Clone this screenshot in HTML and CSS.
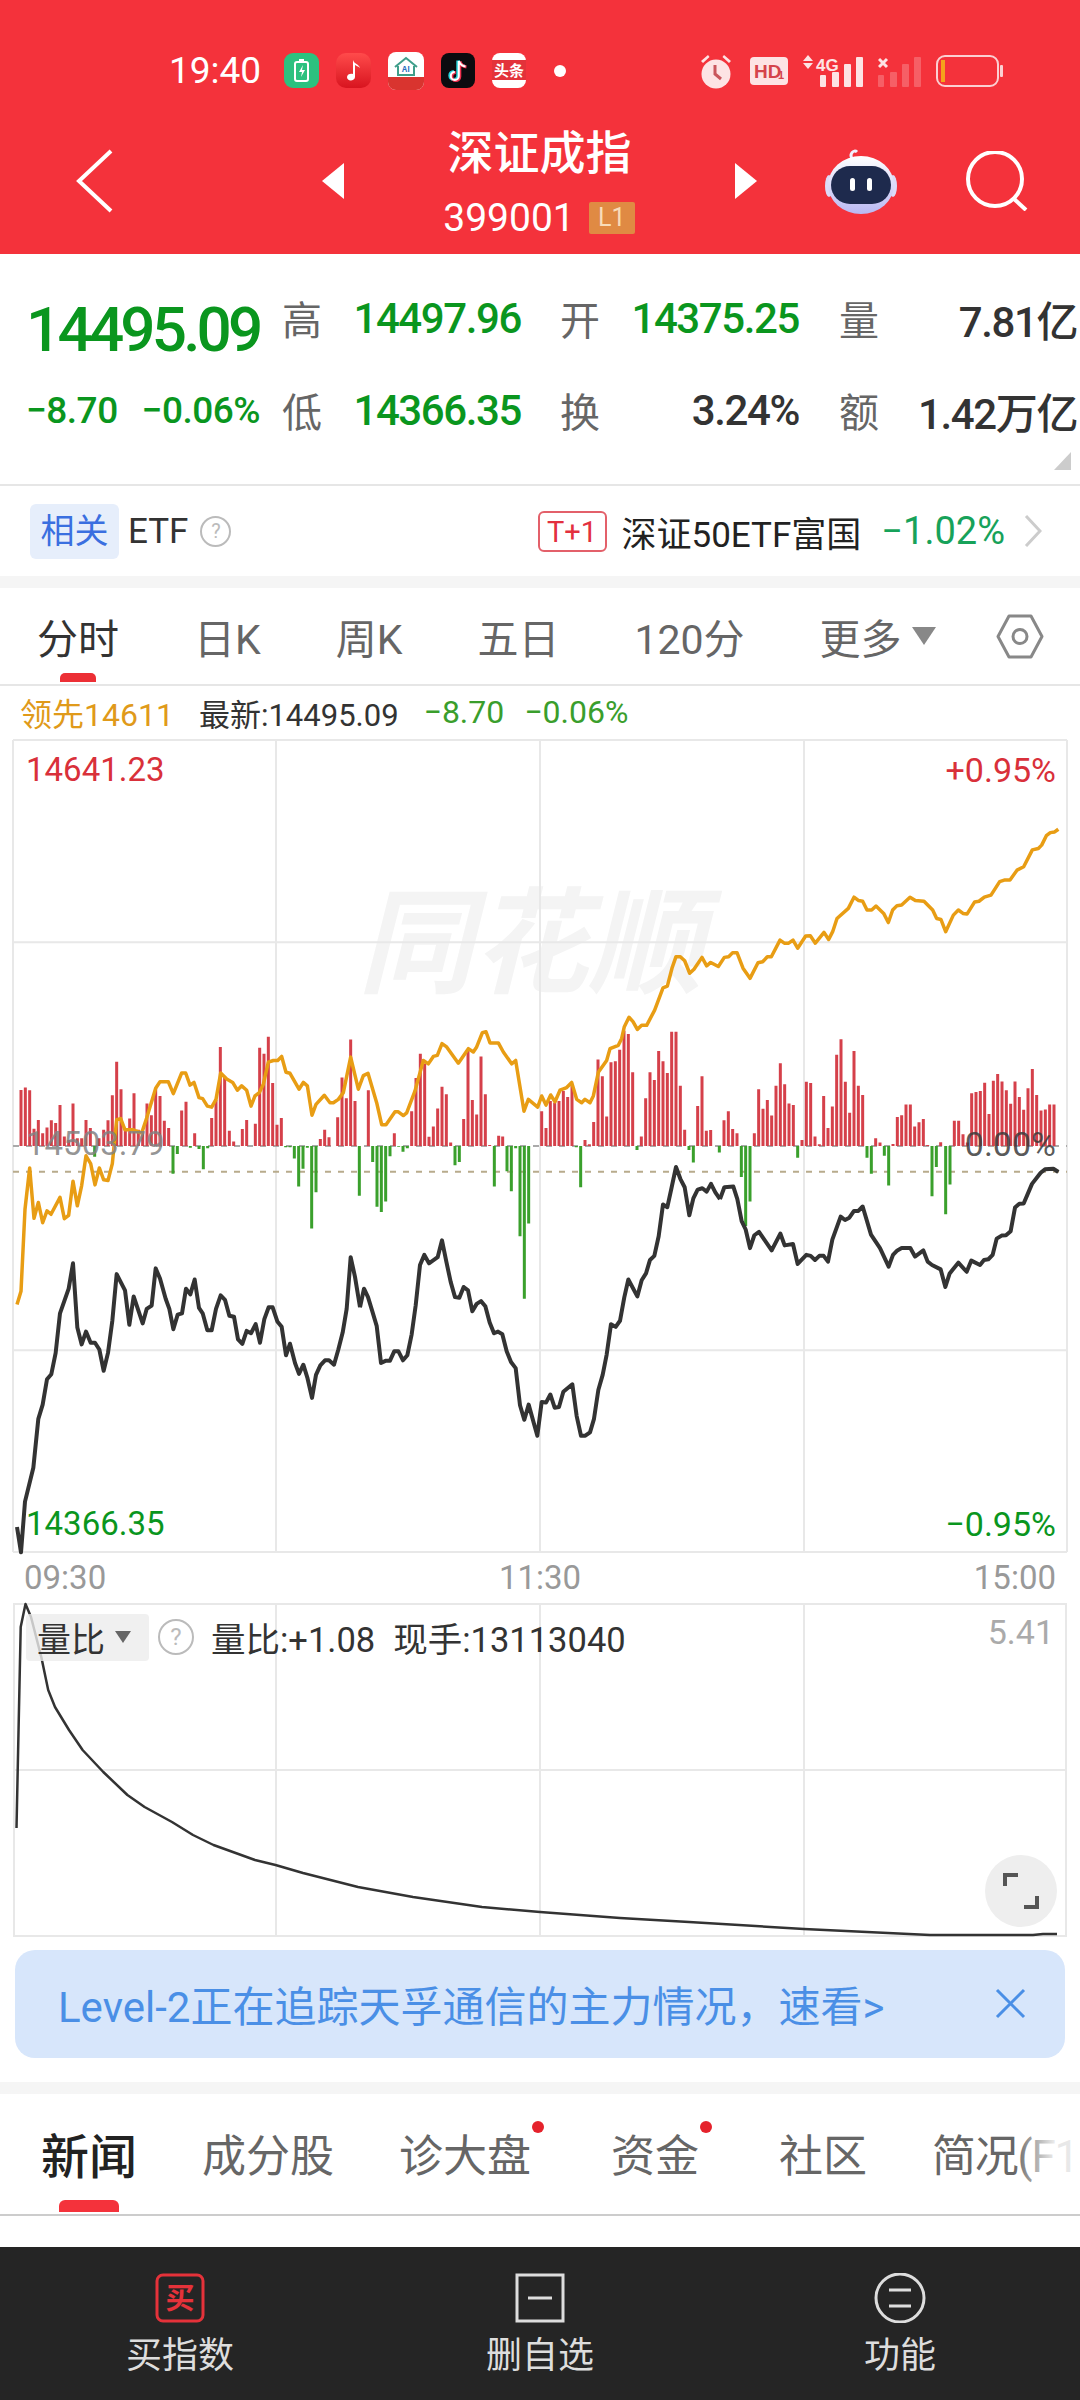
FILE: index.html
```html
<!DOCTYPE html>
<html lang="zh-CN">

<head>
  <meta charset="UTF-8">
  <meta name="viewport" content="width=device-width, initial-scale=1.0">
  <title>深证成指</title>
  <link rel="stylesheet" href="styles.css">
</head>

<body>
  <div class="main">
    <!-- 顶部红色区域 -->
    <div class="header">
      <div class="status">
        <span class="clock">19:40</span>
        <div class="apps">
          <svg width="35" height="35" viewBox="0 0 35 35"><rect width="35" height="35" rx="9" fill="#2cc17f"/><rect x="11" y="9" width="13" height="19" rx="2" fill="none" stroke="#fff" stroke-width="2"/><rect x="15" y="6" width="5" height="3" fill="#fff"/><path d="M19 12l-4 7h3l-1 5 4-7h-3z" fill="#fff"/></svg>
          <svg width="35" height="35" viewBox="0 0 35 35"><defs><linearGradient id="musicbg" x1="0" y1="0" x2="0" y2="1"><stop offset="0" stop-color="#ff4b4b"/><stop offset="1" stop-color="#d8141f"/></linearGradient></defs><rect width="35" height="35" rx="10" fill="url(#musicbg)"/><path d="M17 7c1 4 6 4 7 8-2-2-4-2-5-3v12c0 4-8 5-8 0 0-3 4-4 6-3z" fill="#fff"/></svg>
          <svg width="36" height="38" viewBox="0 0 36 38"><rect width="36" height="38" rx="8" fill="#fff"/><path d="M0 25h36v5a8 8 0 0 1-8 8H8a8 8 0 0 1-8-8z" fill="#d9342f"/><path d="M7 15L18 6l11 9M10 14v9h16v-9" fill="none" stroke="#3f9e8a" stroke-width="2"/><text class="app-text" x="18" y="20" font-size="8" fill="#2b6fc0" text-anchor="middle">AI</text></svg>
          <svg width="34" height="35" viewBox="0 0 34 35"><rect width="34" height="35" rx="8" fill="#0b0b0f"/><path d="M17.800 8v15a4 4 0 1 1-4-4M18 8c1 3.500 3.500 5 6.500 5.500" fill="none" stroke="#25d6de" stroke-width="3" transform="translate(-1 -.5)"/><path d="M17.800 8v15a4 4 0 1 1-4-4M18 8c1 3.500 3.500 5 6.500 5.500" fill="none" stroke="#f0304f" stroke-width="3" transform="translate(1 .5)"/><path d="M17.800 8v15a4 4 0 1 1-4-4M18 8c1 3.500 3.500 5 6.500 5.500" fill="none" stroke="#fff" stroke-width="2"/></svg>
          <svg width="34" height="35" viewBox="0 0 34 35"><rect width="34" height="35" rx="8" fill="#fff"/><rect y="7" width="34" height="20" fill="#e3323a"/><text class="app-text" x="17" y="23" font-size="15" fill="#fff" text-anchor="middle">头条</text></svg>
          <span class="dot"></span>
        </div>
        <div class="sys">
          <svg class="alarm" width="32" height="36" viewBox="0 0 32 36"><g fill="#fde3e4"><circle cx="16" cy="21" r="14.500"/><path d="M1 8l7-6 1.500 2-6.500 6zM31 8l-7-6-1.500 2 6.500 6z"/></g><path d="M15 12v9l6 5" fill="none" stroke="#c9565c" stroke-width="3"/></svg>
          <svg width="38" height="28" viewBox="0 0 38 28"><rect width="38" height="28" rx="4" fill="#fde3e4"/><text class="hd-text" x="4" y="21" font-size="19" fill="#d5444b">HD</text><text class="hd-text" x="28" y="22" font-size="11" fill="#d5444b">1</text></svg>
          <svg width="60" height="32" viewBox="0 0 60 32"><g fill="#fde3e4"><path d="M0 6l5-6 5 6zM0 8h10l-5 6z"/><rect x="17" y="20" width="6" height="12" rx="1"/><rect x="29" y="17" width="7" height="15" rx="1"/><rect x="41" y="9" width="7" height="23" rx="1"/><rect x="53" y="2" width="7" height="30" rx="1"/></g><text class="hd-text" x="13" y="16" font-size="17" fill="#fde3e4">4G</text></svg>
          <svg width="43" height="32" viewBox="0 0 43 32"><g fill="#fff" opacity=".22"><rect y="20" width="6" height="12" rx="1"/><rect x="12" y="17" width="7" height="15" rx="1"/><rect x="24" y="9" width="7" height="23" rx="1"/><rect x="36" y="2" width="7" height="30" rx="1"/></g><path d="M1 4l8 8M9 4l-8 8" stroke="#fde3e4" stroke-width="3"/></svg>
          <svg width="68" height="32" viewBox="0 0 68 32"><rect x="1" y="1" width="61" height="30" rx="8" fill="none" stroke="#fbd0d2" stroke-width="2"/><rect x="5" y="5" width="4" height="22" fill="#f5a31c"/><rect x="64" y="10" width="3" height="12" rx="1" fill="#fbd0d2"/></svg>
        </div>
      </div>
      <div class="nav">
        <svg class="back" width="37" height="64" viewBox="0 0 37 64"><path d="M35 2L3 32l32 30" fill="none" stroke="#fff" stroke-width="4"/></svg>
        <span class="tri tri-left"></span>
        <div class="title">
          <h1>深证成指</h1>
          <div class="code"><span>399001</span><em>L1</em></div>
        </div>
        <span class="tri tri-right"></span>
        <svg class="robot" width="72" height="66" viewBox="0 0 72 66">
          <defs><linearGradient id="shell" x1="0" y1="0" x2="0" y2="1"><stop offset="0" stop-color="#fff"/><stop offset="1" stop-color="#b9b8f2"/></linearGradient></defs>
          <path d="M28 12c-5-6 1-11 4-8" fill="none" stroke="#f1f0fd" stroke-width="3"/>
          <ellipse cx="4" cy="38" rx="4" ry="11" fill="#dcdbf8"/>
          <ellipse cx="68" cy="38" rx="4" ry="11" fill="#dcdbf8"/>
          <ellipse cx="36" cy="37" rx="33" ry="29" fill="url(#shell)"/>
          <rect x="6" y="18" width="60" height="38" rx="19" fill="#1e2a4d"/>
          <rect x="25" y="30" width="5" height="13" rx="2.500" fill="#fff"/>
          <rect x="42" y="30" width="5" height="13" rx="2.500" fill="#fff"/>
        </svg>
        <svg class="search" width="62" height="60" viewBox="0 0 62 60"><circle cx="29" cy="28" r="27" fill="none" stroke="#fff" stroke-width="4"/><path d="M47 47l13 12" stroke="#fff" stroke-width="4"/></svg>
      </div>
    </div>

    <!-- 行情数据 -->
    <div class="quote">
      <div class="big-price">14495.09</div>
      <span class="lab">高</span><span class="val up">14497.96</span>
      <span class="lab">开</span><span class="val up">14375.25</span>
      <span class="lab">量</span><span class="val">7.81亿</span>
      <div class="change"><span>−8.70</span><span>−0.06%</span></div>
      <span class="lab">低</span><span class="val up">14366.35</span>
      <span class="lab">换</span><span class="val">3.24%</span>
      <span class="lab">额</span><span class="val">1.42万亿</span>
      <span class="corner"></span>
    </div>

    <!-- 相关ETF -->
    <div class="etf">
      <span class="chip">相关</span>
      <span class="etf-label">ETF</span>
      <span class="help">?</span>
      <span class="t1">T+1</span>
      <span class="etf-name">深证50ETF富国</span>
      <span class="etf-rate">−1.02%</span>
      <svg class="more" width="18" height="32" viewBox="0 0 18 32"><path d="M2 1l14 15L2 31" fill="none" stroke="#ccc" stroke-width="3"/></svg>
    </div>
    <div class="band"></div>

    <div class="period">
      <span class="active">分时</span>
      <span>日K</span>
      <span>周K</span>
      <span>五日</span>
      <span>120分</span>
      <span class="period-more">更多<i></i></span>
      <svg class="gear" width="48" height="45" viewBox="0 0 48 45"><path d="M13 2h22l11 20.500L35 43H13L2 22.500z" fill="none" stroke="#888" stroke-width="3" stroke-linejoin="round"/><circle cx="24" cy="22.500" r="7" fill="none" stroke="#888" stroke-width="3"/></svg>
    </div>

    <div class="legend">
      <span class="lead">领先14611</span>
      <span class="latest">最新:14495.09</span>
      <span class="down">−8.70</span>
      <span class="down">−0.06%</span>
    </div>

    <!-- 分时图 单位：横向1/3像素 -->
    <div class="chart">
      <span class="mark">同花顺</span>
      <svg class="plot" viewBox="39 -858 3162 2402" preserveAspectRatio="none">
        <path class="grid" d="M39 -858V1544M828 -858V1544M1620 -858V1544M2412 -858V1544M3201 -858V1544M39 -858H3201M39 -260H3201M39 947H3201M39 1544H3201"/>
        <path class="base" d="M39 343H3201"/>
        <path class="zero" d="M39 419H3201"/>
        <path class="bar-up" d="M63 343V177M76 343V170M89 343V178M102 343V292M115 343V266M128 343V305M141 343V288M154 343V267M167 343V275M180 343V222M193 343V315M206 343V325M219 343V217M232 343V320M245 343V320M258 343V266M271 343V290M297 343V320M311 343V295M324 343V267M337 343V193M350 343V94M363 343V175M376 343V290M389 343V262M402 343V187M415 343V295M428 343V300M441 343V217M454 343V252M467 343V172M480 343V195M493 343V268M506 343V290M545 343V238M558 343V212M584 343V305M635 343V260M648 343V207M661 343V50M674 343V140M688 343V298M701 343V330M727 343V293M740 343V266M766 343V277M779 343V52M792 343V70M805 343V20M818 343V157M831 343V280M844 343V260M961 343V322M974 343V295M987 343V317M1013 343V258M1026 343V140M1039 343V202M1052 343V28M1065 343V210"/>
        <path class="bar-down" d="M284 343V375M519 343V425M532 343V367M571 343V348M597 343V352M610 343V412M623 343V350M857 343V347M870 343V347M883 343V380M896 343V463M909 343V410M922 343V348M935 343V587M948 343V480M1078 343V490"/>
        <g transform="translate(1080 0)">
          <path class="bar-up" d="M25 343V178M103 343V305M155 343V240M168 343V142M181 343V70M194 343V100M207 343V316M220 343V285M233 343V232M246 343V168M259 343V190M272 343V333M311 343V263M324 343V60M337 343V207M350 343V250M363 343V78M376 343V190M389 343V340M416 343V313M428 343V315M545 343V240M558 343V290M571 343V210M584 343V215M597 343V210M610 343V180M623 343V198M636 343V165M675 343V325M688 343V338M701 343V272M714 343V87M727 343V137M740 343V256M753 343V95M766 343V92M779 343V58M792 343V2M805 343V12M818 343V125M844 343V315M857 343V202M870 343V125M883 343V148M896 343V62M909 343V92M922 343V127M935 343V5M948 343V5M961 343V165M974 343V295M1013 343V225M1026 343V137M1039 343V298M1052 343V296"/>
          <path class="bar-down" d="M38 343V390M51 343V523M64 343V538M77 343V507M90 343V373M116 343V345M129 343V360M142 343V350M285 343V400M298 343V390M403 343V463M441 343V418M454 343V477M467 343V350M480 343V610M493 343V795M506 343V572M649 343V347M662 343V465M831 343V355M987 343V355M1000 343V392M1078 343V362"/>
        </g>
        <g transform="translate(2160 0)">
          <path class="bar-up" d="M12 343V267M25 343V240M38 343V293M51 343V305M103 343V305M116 343V175M129 343V233M142 343V207M155 343V253M168 343V165M181 343V98M194 343V160M207 343V217M220 343V222M246 343V325M259 343V153M272 343V157M285 343V315M298 343V338M311 343V195M324 343V290M337 343V226M350 343V73M363 343V27M376 343V153M389 343V245M402 343V62M415 343V165M428 343V192M467 343V320M480 343V333M519 343V337M532 343V257M545 343V252M558 343V220M571 343V220M584 343V285M597 343V273M610 343V263M623 343V340M662 343V332M703 343V268M716 343V268M729 343V308M742 343V333M755 343V187M768 343V183M781 343V180M794 343V156M807 343V248M820 343V150M833 343V130M846 343V152M859 343V178M872 343V218M885 343V152M898 343V198M911 343V236M924 343V172M937 343V115M950 343V192M963 343V238M976 343V235M989 343V220M1002 343V220"/>
          <path class="bar-down" d="M64 343V435M77 343V580M90 343V507M233 343V378M441 343V378M454 343V425M493 343V372M506 343V460M636 343V492M649 343V405M677 343V545M690 343V457"/>
        </g>
        <!-- 领先指标 -->
        <polyline class="line-lead" points="51,812 63,773 75,530 89,408 102,557 115,510 128,570 141,535 153,545 180,495 193,558 206,548 219,447 232,520 245,460 258,372 272,395 285,458 298,408 311,443 324,445 337,395 350,265 362,262 375,295 400,295 425,305 440,260 467,172 480,153 505,153 520,188 545,127 557,127 570,163 582,155 597,200 608,203 622,225 635,228 648,205 662,127 680,145 698,155 712,178 725,165 740,178 753,225 765,195 778,185 790,160 805,95 820,90 833,90 845,78 858,125 870,128 897,175 910,155 922,165 936,252 948,220 973,193 990,215 1000,215 1015,205 1030,185 1052,80 1075,175 1090,135 1104,128 1130,215 1145,280 1158,280 1185,242 1195,242 1210,253 1220,245 1245,180 1270,90 1285,100 1300,78 1312,75 1326,40 1340,50 1375,98 1405,55 1420,65 1430,50 1447,8 1458,5 1470,38 1495,38 1510,65 1535,100 1547,90 1572,240 1585,205 1613,228 1625,195 1638,222 1652,192 1665,212 1680,178 1700,170 1715,155 1730,205 1745,215 1755,205 1770,215 1780,195 1795,125 1820,90 1830,55 1855,45 1865,25 1873,-10 1887,-38 1899,-25 1912,-2 1925,-14 1940,-14 1964,-59 1989,-125 2002,-130 2016,-183 2028,-217 2041,-217 2054,-205 2069,-168 2082,-180 2106,-215 2120,-190 2132,-200 2155,-188 2173,-215 2186,-217 2198,-229 2211,-229 2229,-183 2250,-153 2274,-199 2288,-202 2302,-217 2314,-217 2340,-266 2353,-257 2366,-257 2379,-266 2393,-242 2417,-278 2431,-279 2446,-257 2472,-289 2486,-268 2498,-291 2511,-330 2545,-360 2562,-393 2576,-383 2588,-381 2601,-355 2615,-355 2628,-367 2651,-345 2665,-318 2678,-355 2691,-368 2705,-370 2730,-393 2746,-383 2772,-381 2798,-355 2810,-330 2823,-327 2837,-291 2860,-340 2875,-355 2889,-345 2901,-343 2924,-379 2937,-381 2953,-393 2973,-399 2999,-439 3015,-444 3030,-444 3051,-473 3071,-483 3097,-533 3115,-537 3125,-547 3139,-575 3151,-584 3164,-586 3175,-594"/>
        <!-- 价格线 -->
        <polyline class="line-price" points="51,1470 63,1545 75,1395 100,1295 115,1150 128,1108 141,1033 154,1018 167,955 180,838 206,765 219,690 232,880 245,930 258,892 272,925 285,925 298,945 311,1008 324,955 337,860 350,722 375,770 388,872 401,788 428,868 440,825 455,815 467,705 480,735 497,795 508,825 520,885 533,842 546,838 558,765 571,782 584,738 597,822 608,838 622,888 635,888 648,825 662,785 675,798 688,845 702,848 714,915 727,928 740,890 753,897 767,870 780,925 793,855 806,820 818,820 832,862 845,878 858,962 870,928 885,985 897,1017 910,990 922,1028 936,1088 948,1020 961,992 975,977 987,977 1002,990 1015,945 1028,895 1040,825 1052,672 1065,730 1080,820"/>
        <polyline class="line-price" transform="translate(1080 0)" points="0,820 12,765 24,790 37,832 50,875 63,985 78,978 90,978 103,950 115,950 129,977 142,962 155,900 167,815 180,695 193,665 207,690 233,672 246,622 259,685 272,745 285,790 298,792 311,760 324,770 337,832 350,810 363,802 376,817 389,865 402,897 414,892 427,900 440,950 453,982 467,1000 480,1110 493,1153 506,1108 532,1200 545,1100 558,1102 571,1078 584,1117 597,1115 610,1070 637,1048 650,1142 663,1200 676,1200 690,1190 702,1150 715,1065 728,1020 740,960 753,870 767,878 780,860 793,790 805,738 832,788 845,740 858,720 870,680 883,668 896,610 909,516 922,524 935,465 948,405 961,440 974,465 988,548 1000,498 1013,472 1027,468 1040,478 1053,455 1066,480 1080,500"/>
        <polyline class="line-price" transform="translate(2160 0)" points="0,500 13,465 40,463 52,500 65,565 77,590 90,645 103,607 117,597 155,652 181,602 194,637 219,633 233,692 259,665 272,668 285,680 298,668 311,668 324,685 337,620 362,552 375,562 388,555 402,535 415,535 428,522 453,605 480,645 506,700 519,665 532,652 545,645 571,645 585,670 610,652 623,685 636,695 662,708 676,760 689,720 715,688 740,715 754,682 780,695 792,680 805,678 818,665 830,617 845,608 858,607 872,595 885,525 898,514 911,513 936,455 962,422 975,412 1000,410 1015,420"/>
      </svg>
      <span class="tag tag-high">14641.23</span>
      <span class="tag tag-high-rate">+0.95%</span>
      <span class="tag tag-pre">14503.79</span>
      <span class="tag tag-zero">0.00%</span>
      <span class="tag tag-low">14366.35</span>
      <span class="tag tag-low-rate">−0.95%</span>
    </div>

    <div class="times">
      <span>09:30</span>
      <span>11:30</span>
      <span>15:00</span>
    </div>

    <!-- 量比副图 -->
    <div class="sub-chart">
      <svg class="plot" viewBox="0 0 1054 334" preserveAspectRatio="none">
        <path class="grid" d="M1 0V334M263 0V334M527 0V334M791 0V334M1053 0V334M0 1H1054M0 167H1054M0 333H1054"/>
        <polyline class="line-ratio" points="3.500,225 7.700,24 12.500,1 18,14 28.300,54 35.200,87 42,104 56,127 69.600,147 90.300,169 114.400,192 131.600,204 159,219 180,232 200.500,242 242,257 262.500,262 290,270 345,284 400,294 469,304 527,309 607,315 676,319 791,326 917,332 1020,332 1030,331 1044,331"/>
      </svg>
      <div class="sub-legend">
        <span class="sub-chip">量比<i></i></span>
        <span class="help help-big">?</span>
        <span class="sub-text">量比:+1.08</span>
        <span class="sub-text">现手:13113040</span>
      </div>
      <span class="sub-max">5.41</span>
      <span class="full">
        <svg width="36" height="36" viewBox="0 0 36 36"><path d="M2 13V2h13M34 23v11H21" fill="none" stroke="#555" stroke-width="4"/></svg>
      </span>
    </div>

    <div class="notice">
      <span>Level-2正在追踪天孚通信的主力情况，速看&gt;</span>
      <svg width="31" height="31" viewBox="0 0 31 31"><path d="M2 2l27 27M29 2L2 29" stroke="#4a8fe6" stroke-width="3"/></svg>
    </div>
    <div class="band band-low"></div>

    <div class="tabs">
      <span class="active">新闻</span>
      <span>成分股</span>
      <span class="dotted">诊大盘</span>
      <span class="dotted">资金</span>
      <span>社区</span>
      <span class="tab-last">简况(F1</span>
    </div>

    <div class="spacer"></div>

    <!-- 底部操作栏 -->
    <div class="footer">
      <div class="action">
        <svg width="50" height="50" viewBox="0 0 50 50"><rect x="2" y="2" width="46" height="46" rx="6" fill="none" stroke="#e5323a" stroke-width="3"/><text class="buy-text" x="25" y="36" font-size="29" text-anchor="middle">买</text></svg>
        <span>买指数</span>
      </div>
      <div class="action">
        <svg width="50" height="50" viewBox="0 0 50 50"><rect x="2" y="2" width="46" height="46" fill="none" stroke="#ddd" stroke-width="3"/><path d="M13 25h24" stroke="#ddd" stroke-width="3"/></svg>
        <span>删自选</span>
      </div>
      <div class="action">
        <svg width="52" height="50" viewBox="0 0 52 50"><circle cx="26" cy="25" r="24" fill="none" stroke="#ddd" stroke-width="3"/><path d="M15 17h22M15 33h22" stroke="#ddd" stroke-width="3"/></svg>
        <span>功能</span>
      </div>
    </div>
  </div>
</body>

</html>
```
FILE: styles.css
```css
* {
  margin: 0;
  padding: 0;
  box-sizing: border-box;
}

body {
  font-family: Roboto, "Noto Sans CJK SC", sans-serif;
  background-color: #fff;
}

.main {
  width: 1080px;
  height: 2400px;
  overflow: hidden;
  display: flex;
  flex-direction: column;
}

/* 顶部 */
.header {
  height: 254px;
  flex: none;
  background-color: #f4323b;
  color: #fff;
}

.status {
  height: 88px;
  padding: 53px 76px 0 169px;
  display: flex;
  align-items: center;

  & .clock {
    width: 91px;
    font-size: 37px;
    line-height: 36px;
    white-space: nowrap;
  }

  & .apps {
    margin-left: 24px;
    display: flex;
    align-items: center;
    gap: 17px;
  }

  & .dot {
    width: 12px;
    height: 12px;
    margin-left: 11px;
    border-radius: 50%;
    background-color: #fff;
  }

  & .sys {
    margin-left: auto;
    display: flex;
    align-items: center;
    gap: 15px;
  }

  & .alarm {
    margin-right: 3px;
  }
}

.app-text {
  font-family: "Noto Sans CJK SC", sans-serif;
  font-weight: 700;
}

.hd-text {
  font-family: "Liberation Sans", sans-serif;
  font-weight: 700;
}

.nav {
  height: 166px;
  padding: 20px 0 0 76px;
  display: flex;
  align-items: center;

  & .back {
    margin-right: 209px;
  }

  & .robot {
    margin-left: 68px;
  }

  & .search {
    margin-left: 69px;
  }
}

.tri {
  width: 0;
  height: 0;
  border-top: 18px solid transparent;
  border-bottom: 18px solid transparent;
}

.tri-left {
  border-right: 22px solid #fff;
}

.tri-right {
  border-left: 22px solid #fff;
}

.title {
  width: 391px;
  text-align: center;

  & h1 {
    font-size: 46px;
    line-height: 50px;
    font-weight: 500;
  }

  & .code {
    margin-top: 23px;
    height: 34px;
    display: flex;
    justify-content: center;
    align-items: center;
    gap: 14px;
    font-size: 39px;
    padding-right: 1px;
  }

  & em {
    width: 46px;
    height: 32px;
    line-height: 32px;
    font-size: 25px;
    font-style: normal;
    background-color: #e08a43;
    color: #f8dcb9;
    border-radius: 2px;
  }
}

/* 行情 */
.quote {
  position: relative;
  flex: none;
  height: 232px;
  padding: 18px 3px 0 26px;
  border-bottom: 2px solid #e6e6e6;
  display: grid;
  grid-template-columns: 255px 41px 199px 79px 199px 80px 198px;
  grid-template-rows: 92px 92px;
  align-items: center;
  color: #333;

  & .lab {
    font-size: 40px;
    color: #666;
    text-align: right;
  }

  & .val {
    font-size: 42px;
    font-weight: 500;
    letter-spacing: -1.4px;
    text-align: right;
  }

  & .up {
    color: #0a961e;
  }

  & .big-price {
    font-size: 62px;
    line-height: 62px;
    font-weight: 500;
    letter-spacing: -3.800px;
    color: #0a961e;
    margin-top: 24px;
  }

  & .change {
    width: 234px;
    font-size: 37px;
    font-weight: 500;
    letter-spacing: -.5px;
    color: #0a961e;
    display: flex;
    justify-content: space-between;
  }

  & .corner {
    position: absolute;
    right: 9px;
    bottom: 14px;
    width: 0;
    height: 0;
    border-left: 17px solid transparent;
    border-bottom: 18px solid #ccc;
  }
}

/* ETF */
.etf {
  height: 90px;
  flex: none;
  padding: 0 38px 0 30px;
  display: flex;
  align-items: center;

  & .chip {
    width: 89px;
    height: 55px;
    line-height: 55px;
    text-align: center;
    font-size: 34px;
    color: #3a6fe0;
    background-color: #e6eefb;
    border-radius: 6px;
  }

  & .etf-label {
    margin-left: 9px;
    font-size: 35px;
    color: #333;
  }

  & .help {
    margin-left: 12px;
  }

  & .t1 {
    margin-left: auto;
    width: 69px;
    height: 41px;
    line-height: 39px;
    text-align: center;
    font-size: 29px;
    color: #e3303e;
    border: 2px solid #e3606a;
    border-radius: 6px;
  }

  & .etf-name {
    margin-left: 15px;
    font-size: 35px;
    color: #222;
  }

  & .etf-rate {
    margin-left: 20px;
    font-size: 38px;
    color: #17a25a;
  }

  & .more {
    margin-left: 19px;
  }
}

.help {
  width: 31px;
  height: 31px;
  line-height: 27px;
  text-align: center;
  font-size: 20px;
  color: #bbb;
  border: 2px solid #bbb;
  border-radius: 50%;
}

.help-big {
  width: 36px;
  height: 36px;
  line-height: 32px;
  font-size: 24px;
}

.band {
  height: 12px;
  flex: none;
  background-color: #f5f5f5;
}

/* 周期切换 */
.period {
  height: 98px;
  flex: none;
  padding: 0 36px 0 37px;
  border-bottom: 2px solid #e6e6e6;
  display: flex;
  align-items: center;
  gap: 75px;
  font-size: 41px;
  color: #666;

  & span {
    position: relative;
    white-space: nowrap;
  }

  & .active {
    color: #333;
  }

  & .active::after {
    content: "";
    position: absolute;
    left: 23px;
    top: 67px;
    width: 36px;
    height: 9px;
    background-color: #ec2f35;
    border-radius: 5px 5px 0 0;
  }

  & .period-more {
    display: flex;
    align-items: center;
    gap: 10px;
  }

  & i {
    width: 0;
    height: 0;
    border-left: 12px solid transparent;
    border-right: 12px solid transparent;
    border-top: 18px solid #888;
  }

  & .gear {
    flex: none;
    margin-left: -15px;
  }
}

.legend {
  height: 52px;
  flex: none;
  padding-left: 20px;
  display: flex;
  align-items: center;
  font-size: 31px;

  & .lead {
    font-size: 32px;
    color: #e09a1a;
    margin-right: 25px;
  }

  & .latest {
    color: #333;
    margin-right: 25px;
  }

  & .down {
    color: #3a9e2c;
    font-size: 32px;
    margin-right: 20px;
  }
}

/* 分时图 */
.chart {
  position: relative;
  flex: none;
  height: 812px;
  margin: 2px 13px 0;
}

.plot {
  position: absolute;
  left: 0;
  top: 0;
  width: 100%;
  height: 100%;
  overflow: visible;
  fill: none;

  & * {
    vector-effect: non-scaling-stroke;
  }

  & .grid {
    stroke: #e8e8e8;
    stroke-width: 2;
  }

  & .base {
    stroke: #aaa;
    stroke-width: 2;
    stroke-dasharray: 6 7;
  }

  & .zero {
    stroke: #b8ab8c;
    stroke-width: 2;
    stroke-dasharray: 6 7;
  }

  & .bar-up {
    stroke: #d5404a;
    stroke-width: 3;
  }

  & .bar-down {
    stroke: #3aa02c;
    stroke-width: 3;
  }

  & .line-lead {
    stroke: #e89d14;
    stroke-width: 3.500;
    stroke-linejoin: round;
  }

  & .line-price {
    stroke: #333;
    stroke-width: 4;
    stroke-linejoin: round;
  }

  & .line-ratio {
    stroke: #333;
    stroke-width: 2.500;
    stroke-linejoin: round;
  }
}

.mark {
  position: absolute;
  left: 345px;
  top: 140px;
  font-size: 115px;
  line-height: 130px;
  font-weight: 700;
  font-style: italic;
  white-space: nowrap;
  color: #f4f4f4;
}

.tag {
  position: absolute;
  font-size: 33px;
  line-height: 38px;
}

.tag-high {
  left: 13px;
  top: 11px;
  color: #d9303a;
}

.tag-high-rate {
  right: 11px;
  top: 11px;
  font-size: 34px;
  color: #d9303a;
}

.tag-pre {
  left: 13px;
  top: 385px;
  color: rgba(130, 130, 130, .85);
}

.tag-zero {
  right: 11px;
  top: 385px;
  font-size: 34px;
  color: rgba(60, 60, 60, .85);
}

.tag-low {
  left: 13px;
  bottom: 9px;
  color: #0a961e;
}

.tag-low-rate {
  right: 11px;
  bottom: 9px;
  font-size: 34px;
  color: #0a961e;
}

.times {
  height: 51px;
  flex: none;
  padding: 0 24px;
  display: flex;
  align-items: center;
  justify-content: space-between;
  font-size: 33px;
  color: #999;
}

/* 量比 */
.sub-chart {
  position: relative;
  flex: none;
  height: 334px;
  margin: 0 13px;
}

.sub-legend {
  position: absolute;
  left: 13px;
  top: 9px;
  display: flex;
  align-items: center;
  font-size: 34.500px;
  color: #333;

  & .sub-chip {
    width: 123px;
    height: 47px;
    padding-left: 11px;
    display: flex;
    align-items: center;
    gap: 10px;
    background-color: rgba(236, 236, 236, .8);
    border-radius: 4px;
    font-size: 34px;
  }

  & i {
    width: 0;
    height: 0;
    border-left: 8px solid transparent;
    border-right: 8px solid transparent;
    border-top: 12px solid #666;
  }

  & .help {
    margin-left: 9px;
  }

  & .sub-text {
    margin-left: 17px;
    white-space: nowrap;
  }

  & .sub-text + .sub-text {
    margin-left: 18px;
  }
}

.sub-max {
  position: absolute;
  right: 13px;
  top: 9px;
  font-size: 34px;
  color: #aaa;
}

.full {
  position: absolute;
  right: 10px;
  bottom: 10px;
  width: 72px;
  height: 72px;
  border-radius: 50%;
  background-color: #eee;
  display: flex;
  align-items: center;
  justify-content: center;
}

.notice {
  flex: none;
  height: 108px;
  margin: 13px 15px 24px;
  padding: 0 39px 2px 43px;
  display: flex;
  align-items: center;
  justify-content: space-between;
  font-size: 42px;
  color: #4a8fe6;
  background-color: #d7e6fb;
  border-radius: 20px;
}

/* 资讯标签 */
.tabs {
  position: relative;
  flex: none;
  height: 122px;
  padding: 0 0 2px 41px;
  border-bottom: 2px solid #ccc;
  display: flex;
  align-items: center;
  gap: 65px;
  white-space: nowrap;
  overflow: hidden;
  font-size: 44px;
  color: #666;

  & span {
    position: relative;
  }

  & .active {
    font-size: 48px;
    font-weight: 500;
    color: #222;
  }

  & .active::after {
    content: "";
    position: absolute;
    left: 18px;
    top: 82px;
    width: 60px;
    height: 12px;
    background-color: #f4323b;
    border-radius: 6px 6px 0 0;
  }

  & .dotted {
    margin-right: 15px;
  }

  & .dotted::after {
    content: "";
    position: absolute;
    right: -13px;
    top: 0;
    width: 12px;
    height: 12px;
    background-color: #e5222c;
    border-radius: 50%;
  }

  & .tab-last {
    letter-spacing: -1.200px;
  }
}

/* 右侧渐隐 */
.tabs::after {
  content: "";
  position: absolute;
  right: 0;
  top: 0;
  bottom: 0;
  width: 66px;
  background: linear-gradient(90deg, rgba(255, 255, 255, 0), rgba(255, 255, 255, .85) 60%);
}

.spacer {
  flex: 1;
}

/* 底部 */
.footer {
  height: 153px;
  flex: none;
  padding-top: 26px;
  background-color: #252525;
  display: flex;
}

.action {
  flex: 1;
  display: flex;
  flex-direction: column;
  align-items: center;
  font-size: 36px;
  color: #ddd;

  & span {
    margin-top: 8px;
    line-height: 50px;
  }
}

.buy-text {
  font-family: "Noto Sans CJK SC", sans-serif;
  font-weight: 700;
  fill: #e5323a;
}
```
